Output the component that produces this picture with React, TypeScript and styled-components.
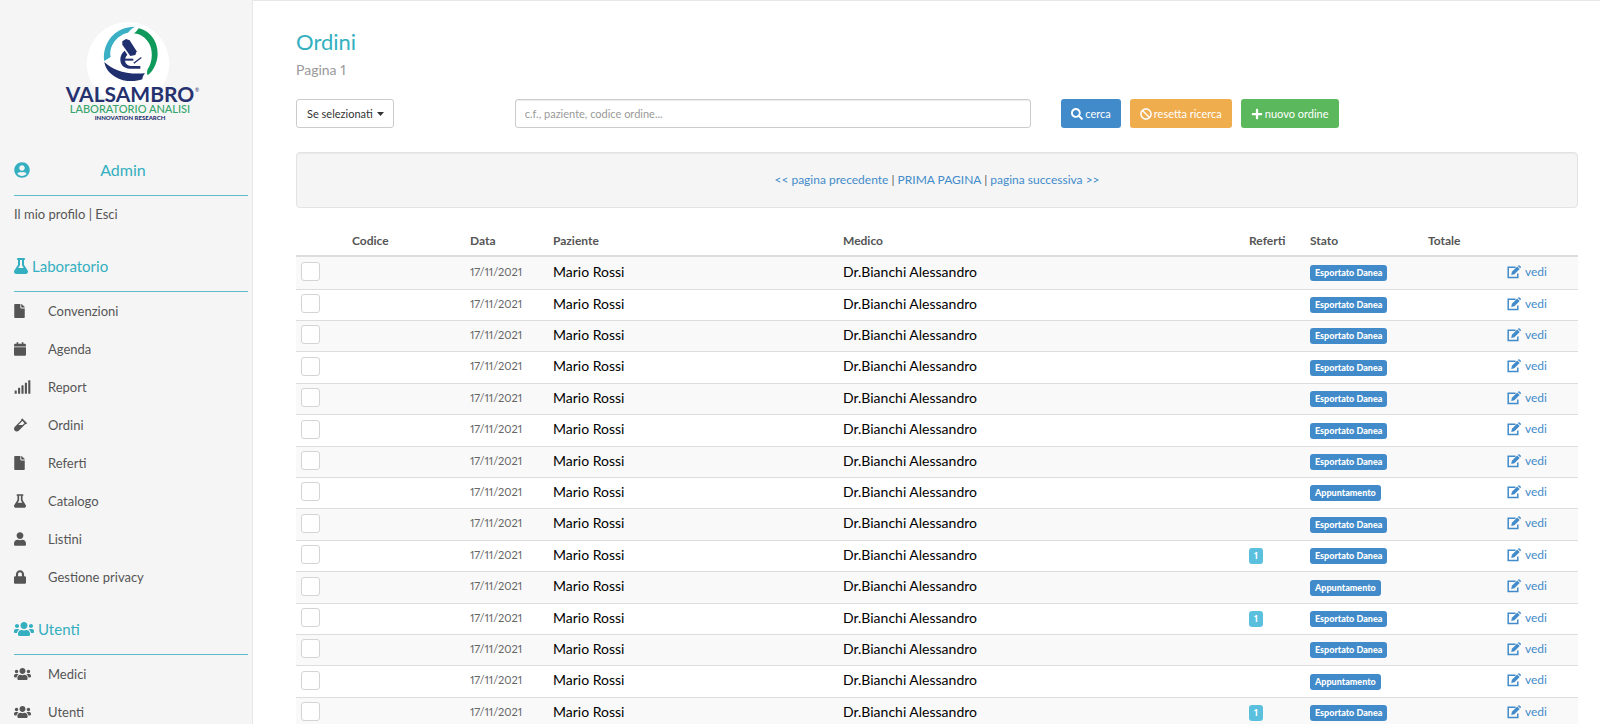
import React from 'react';
import styled, { createGlobalStyle } from 'styled-components';
import type { IconType } from 'react-icons';
import {
  FaBan,
  FaCalendar,
  FaFile,
  FaFlask,
  FaLock,
  FaPlus,
  FaSearch,
  FaSignal,
  FaUser,
  FaUserCircle,
  FaUsers,
  FaVial,
} from 'react-icons/fa';

const teal = '#33afc0';
const blue = '#428bca';

const GlobalStyle = createGlobalStyle`
  * { box-sizing: border-box; }
  body {
    margin: 0;
    background: #fff;
    color: #555;
    font-family: Lato, "Liberation Sans", sans-serif;
    font-size: 13px;
    line-height: 20px;
    font-variant-numeric: proportional-nums;
  }
  a { text-decoration: none; }
`;

const Page = styled.div`
  display: flex;
  min-height: 100vh;
`;

const Sidebar = styled.aside`
  flex: 0 0 253px;
  padding: 0 4px 0 14px;
  background: #f5f5f5;
  border-right: 1px solid #e7e7e7;
`;

const LogoBox = styled.div`
  display: flex;
  justify-content: center;
  height: 137px;
  padding-top: 12px;
  svg { overflow: visible; }
`;

const SectionTitle = styled.h2<{ $icon: number }>`
  display: flex;
  align-items: center;
  gap: 4px;
  margin: 0;
  padding: 21px 0 13px;
  border-bottom: 1px solid #5bbccb;
  color: ${teal};
  font-size: 15px;
  font-weight: 400;
  line-height: 24px;
  svg { height: 16px; width: ${p => p.$icon}px; }
`;

const AccountName = styled.span`
  flex: 1;
  padding-right: 36px;
  font-size: 16px;
  text-align: center;
`;

const AccountLinks = styled.div`
  height: 37px;
  line-height: 37px;
  a { color: #555; }
`;

const Menu = styled.ul`
  margin: 0;
  padding: 0;
  list-style: none;
`;

const MenuLink = styled.a<{ $icon: number }>`
  display: grid;
  grid-template-columns: 34px 1fr;
  align-items: center;
  height: 38px;
  color: #555;
  svg { height: 14px; width: ${p => p.$icon}px; }
`;

const Main = styled.main`
  flex: 1;
  min-width: 0;
  padding: 27px 22px 0 43px;
  border-top: 1px solid #e7e7e7;
`;

const Title = styled.h1`
  margin: 0;
  color: ${teal};
  font-size: 22px;
  font-weight: 400;
  line-height: 28px;
`;

const Subtitle = styled.p`
  margin: 4px 0 19px;
  color: #999;
  font-size: 14px;
`;

const Toolbar = styled.div`
  display: grid;
  grid-template-columns: repeat(12, 1fr);
  column-gap: 30px;
`;

const ToolCell = styled.div<{ $span: number }>`
  grid-column: span ${p => p.$span};
  display: flex;
  gap: 9px;
`;

const SelectWrap = styled.div`
  position: relative;
  svg {
    position: absolute;
    right: 10px;
    top: 13px;
    pointer-events: none;
  }
`;

const Select = styled.select`
  appearance: none;
  width: 98px;
  height: 29px;
  padding: 0 10px;
  border: 1px solid #ccc;
  border-radius: 3px;
  background: #fff;
  color: #333;
  font: 11px Lato, "Liberation Sans", sans-serif;
`;

const Search = styled.input`
  width: 100%;
  height: 29px;
  padding: 0 9px;
  border: 1px solid #ccc;
  border-radius: 3px;
  box-shadow: inset 0 1px 1px rgba(0, 0, 0, 0.075);
  font: 11px Lato, "Liberation Sans", sans-serif;
  &::placeholder { color: #999; }
`;

const Button = styled.button<{ $fill: string }>`
  display: inline-flex;
  align-items: center;
  gap: 2px;
  height: 29px;
  padding: 0 10px;
  border: 0;
  border-radius: 3px;
  background: ${p => p.$fill};
  color: #fff;
  font: 11px Lato, "Liberation Sans", sans-serif;
  white-space: nowrap;
  svg { width: 12px; height: 12px; }
`;

const Pager = styled.nav`
  margin-top: 24px;
  padding: 17px;
  border: 1px solid #e3e3e3;
  border-radius: 4px;
  background: #f5f5f5;
  box-shadow: inset 0 1px 1px rgba(0, 0, 0, 0.05);
  font-size: 12px;
  text-align: center;
  a { color: ${blue}; }
`;

const Table = styled.table`
  width: 100%;
  margin-top: 19px;
  border-collapse: separate;
  border-spacing: 0;
  table-layout: fixed;
`;

const Th = styled.th`
  height: 30px;
  padding: 0 5px;
  border-bottom: 2px solid #ddd;
  font-size: 12px;
  font-weight: 700;
  text-align: left;
`;

const Col = styled.col<{ $w?: number }>`
  width: ${p => (p.$w ? `${p.$w}px` : 'auto')};
`;

const Row = styled.tr`
  height: 31px;
  &:nth-child(5n + 1), &:nth-child(5n + 4) { height: 32px; }
  &:nth-child(odd) { background: #f9f9f9; }
  &:not(:first-child) > td { border-top: 1px solid #ddd; }
`;

const Td = styled.td`
  padding: 0 5px 3px;
  white-space: nowrap;
`;

const DateCell = styled(Td)`
  font-size: 11px;
  color: #666;
`;

const NameCell = styled(Td)`
  color: #000;
  font-size: 14px;
`;

const Check = styled.input`
  appearance: none;
  display: block;
  width: 19px;
  height: 19px;
  margin: 0;
  border: 1px solid #d4d4d4;
  border-radius: 3px;
  background: #fff;
`;

const Label = styled.span<{ $fill: string }>`
  display: block;
  width: fit-content;
  padding: 0 5px;
  border-radius: 3px;
  background: ${p => p.$fill};
  color: #fff;
  font-size: 9px;
  font-weight: 900;
  line-height: 16px;
`;

const LabelCell = styled(Td)`
  padding-bottom: 0;
`;

const ViewLink = styled.a`
  display: flex;
  align-items: center;
  gap: 4px;
  color: ${blue};
  font-size: 12px;
`;

function Logo() {
  return (
    <svg width="134" height="112" viewBox="0 0 134 112" role="img" aria-label="Valsambro">
      <g transform="translate(-14 -2) scale(0.3333)">
        <circle cx="234" cy="160" r="124" fill="#fff" />
        <path d="M163 153C156 112 184 50 255 50C247 55 238 62 234 68C200 76 176 108 182 141Z" fill="#3bb0c4" />
        <path d="M252 70C258 66 262 60 266 55C300 62 325 95 323 135C321 162 308 185 293 196C290 190 291 184 293 178C309 155 309 120 297 100C287 83 272 72 252 70Z" fill="#0f9a5c" />
        <path d="M163 156C185 178 225 195 285 190C280 196 277 203 277 208C255 216 220 216 195 200C178 190 166 175 163 156Z" fill="#20306f" />
        <g fill="#20306f">
          <path d="M217 94L228 87L239 91L260 124L256 135L241 138L217 104Z" />
          <path d="M224 122C208 134 206 160 222 171Q230 176 238 176H271V168H242C224 164 220 148 232 134Z" />
          <path d="M222 146H250V152H222Z" />
          <path d="M250 158L273 141L275 144L253 161Z" />
        </g>
      </g>
      <text x="66" y="90" textAnchor="middle" fontSize="21" fontWeight="700" fill="#26316f">VALSAMBRO</text>
      <text x="133" y="80" fontSize="5" textAnchor="middle" fill="#26316f">®</text>
      <text x="66" y="101" textAnchor="middle" fontSize="11" fontWeight="500" fill="#35a56b">LABORATORIO ANALISI</text>
      <text x="66" y="108" textAnchor="middle" fontSize="6" fontWeight="900" fill="#26316f">INNOVATION RESEARCH</text>
    </svg>
  );
}

function EditIcon() {
  return (
    <svg width="14" height="14" viewBox="0 0 14 14" aria-hidden="true">
      <path d="M8.500 2.300H1.200V12.400H10.800V8.500" fill="none" stroke={blue} strokeWidth="1.500" />
      <path d="M4.200 10L4.900 6.800L10.200 1.500L12.700 4L7.400 9.300Z" fill={blue} />
      <path d="M10.900 0.900L11.500 0.300Q12 0 12.500 0.400L13.700 1.600Q14.100 2.100 13.700 2.700L13.200 3.200Z" fill={blue} />
    </svg>
  );
}

type MenuEntry = { icon: IconType; width: number; text: string };

const labMenu: MenuEntry[] = [
  { icon: FaFile, width: 11, text: 'Convenzioni' },
  { icon: FaCalendar, width: 12, text: 'Agenda' },
  { icon: FaSignal, width: 17, text: 'Report' },
  { icon: FaVial, width: 13, text: 'Ordini' },
  { icon: FaFile, width: 11, text: 'Referti' },
  { icon: FaFlask, width: 12, text: 'Catalogo' },
  { icon: FaUser, width: 12, text: 'Listini' },
  { icon: FaLock, width: 12, text: 'Gestione privacy' },
];

const userMenu: MenuEntry[] = [
  { icon: FaUsers, width: 17, text: 'Medici' },
  { icon: FaUsers, width: 17, text: 'Utenti' },
];

function MenuList({ entries }: { entries: MenuEntry[] }) {
  return (
    <Menu>
      {entries.map(({ icon: Icon, width, text }) => (
        <li key={text}>
          <MenuLink href="#" $icon={width}>
            <Icon />
            <span>{text}</span>
          </MenuLink>
        </li>
      ))}
    </Menu>
  );
}

const exported = 'Esportato Danea';
const booked = 'Appuntamento';

const orders: { status: string; reports?: number }[] = [
  { status: exported },
  { status: exported },
  { status: exported },
  { status: exported },
  { status: exported },
  { status: exported },
  { status: exported },
  { status: booked },
  { status: exported },
  { status: exported, reports: 1 },
  { status: booked },
  { status: exported, reports: 1 },
  { status: exported },
  { status: booked },
  { status: exported, reports: 1 },
];

export default function App() {
  return (
    <>
      <GlobalStyle />
      <Page>
        <Sidebar>
          <LogoBox>
            <Logo />
          </LogoBox>
          <SectionTitle $icon={16}>
            <FaUserCircle />
            <AccountName>Admin</AccountName>
          </SectionTitle>
          <AccountLinks>
            <a href="#">Il mio profilo</a> | <a href="#">Esci</a>
          </AccountLinks>
          <SectionTitle $icon={14}>
            <FaFlask />
            Laboratorio
          </SectionTitle>
          <MenuList entries={labMenu} />
          <SectionTitle $icon={20}>
            <FaUsers />
            Utenti
          </SectionTitle>
          <MenuList entries={userMenu} />
        </Sidebar>
        <Main>
          <Title>Ordini</Title>
          <Subtitle>Pagina 1</Subtitle>
          <Toolbar>
            <ToolCell $span={2}>
              <SelectWrap>
                <Select aria-label="Azione sugli ordini">
                  <option>Se selezionati</option>
                </Select>
                <svg width="7" height="4" viewBox="0 0 7 4" aria-hidden="true">
                  <path d="M0 0H7L3.500 4Z" fill="#333" />
                </svg>
              </SelectWrap>
            </ToolCell>
            <ToolCell $span={5}>
              <Search type="text" aria-label="Cerca ordini" placeholder="c.f., paziente, codice ordine..." />
            </ToolCell>
            <ToolCell $span={5}>
              <Button $fill={blue}><FaSearch />cerca</Button>
              <Button $fill="#f0ad4e"><FaBan />resetta ricerca</Button>
              <Button $fill="#5cb85c"><FaPlus />nuovo ordine</Button>
            </ToolCell>
          </Toolbar>
          <Pager>
            <a href="#">&lt;&lt; pagina precedente</a> | <a href="#">PRIMA PAGINA</a> | <a href="#">pagina successiva &gt;&gt;</a>
          </Pager>
          <Table>
            <colgroup>
              <Col $w={51} />
              <Col $w={118} />
              <Col $w={83} />
              <Col $w={290} />
              <Col />
              <Col $w={61} />
              <Col $w={118} />
              <Col $w={79} />
              <Col $w={76} />
            </colgroup>
            <thead>
              <tr>
                <Th />
                <Th>Codice</Th>
                <Th>Data</Th>
                <Th>Paziente</Th>
                <Th>Medico</Th>
                <Th>Referti</Th>
                <Th>Stato</Th>
                <Th>Totale</Th>
                <Th />
              </tr>
            </thead>
            <tbody>
              {orders.map((order, i) => (
                <Row key={i}>
                  <Td><Check type="checkbox" aria-label={`Seleziona ordine ${i + 1}`} /></Td>
                  <Td />
                  <DateCell>17/11/2021</DateCell>
                  <NameCell>Mario Rossi</NameCell>
                  <NameCell>Dr.Bianchi Alessandro</NameCell>
                  <LabelCell>{order.reports && <Label $fill="#5bc0de">{order.reports}</Label>}</LabelCell>
                  <LabelCell><Label $fill={blue}>{order.status}</Label></LabelCell>
                  <Td />
                  <Td><ViewLink href="#"><EditIcon />vedi</ViewLink></Td>
                </Row>
              ))}
            </tbody>
          </Table>
        </Main>
      </Page>
    </>
  );
}
